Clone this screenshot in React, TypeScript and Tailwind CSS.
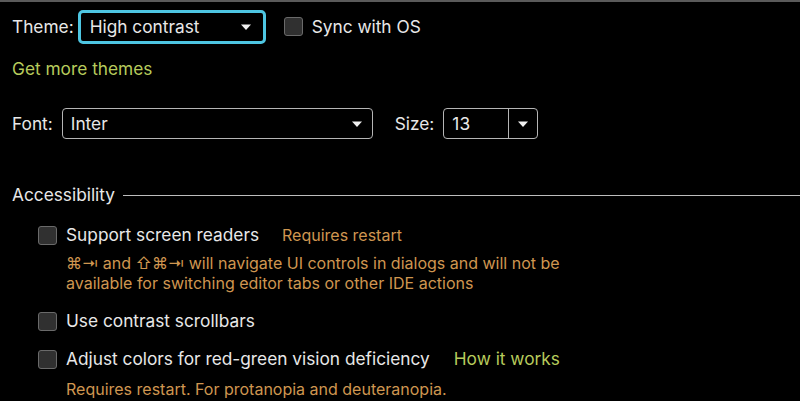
import React from "react";

const Caret = () => (
  <svg width="12" height="8" viewBox="0 0 12 8" className="shrink-0">
    <path d="M1 1.5 L11 1.5 L6 7 Z" fill="#f0f0f0" />
  </svg>
);

const Check = () => (
  <div className="w-[19px] h-[19px] rounded-[3px] border border-[#6a6a6a] bg-[#303030] shrink-0" />
);

export default function App() {
  return (
    <div
      className="w-[800px] h-[401px] bg-black text-[#e8e8e8] overflow-hidden relative border-t-2 border-[#5a5a5a]"
      style={{ fontFamily: "Inter, 'Noto Sans', sans-serif" }}
    >
      <div className="text-[17.3px] leading-[20px]">
        {/* Theme row */}
        <div className="flex items-center h-[35px] mt-[7px] pl-[12px]">
          <span>Theme:</span>
          <div className="ml-[4px] w-[188px] h-[34px] rounded-[5px] border-[3px] border-[#4ec6e2] flex items-center justify-between pl-[9px] pr-[11px]">
            <span>High contrast</span>
            <Caret />
          </div>
          <div className="ml-[18px] flex items-center gap-[9px]">
            <Check />
            <span>Sync with OS</span>
          </div>
        </div>
        {/* Get more themes */}
        <div className="pl-[12px] mt-[15px] text-[#b7cb5c]">Get more themes</div>

        {/* Font row */}
        <div className="flex items-center pl-[12px] mt-[29px] h-[31px]">
          <span>Font:</span>
          <div className="ml-[9px] w-[311px] h-[31px] rounded-[4px] border border-[#b5b5b5] flex items-center justify-between pl-[8px] pr-[9px]">
            <span>Inter</span>
            <Caret />
          </div>
          <span className="ml-[22px]">Size:</span>
          <div className="ml-[9px] w-[95px] h-[31px] rounded-[4px] border border-[#b5b5b5] flex items-stretch">
            <div className="flex-1 flex items-center pl-[8px] border-r border-[#b5b5b5]">13</div>
            <div className="w-[28px] flex items-center justify-center">
              <Caret />
            </div>
          </div>
        </div>

        {/* Accessibility */}
        <div className="flex items-center pl-[12px] mt-[46px]">
          <span>Accessibility</span>
          <div className="ml-[8px] flex-1 h-px bg-[#bdbdbd]" />
        </div>

        <div className="pl-[38px] mt-[20px]">
          <div className="flex items-center gap-[9px] h-[20px]">
            <Check />
            <span>Support screen readers</span>
            <span className="ml-[14px] text-[16px] text-[#cf9650]">Requires restart</span>
          </div>
          <div className="pl-[28px] mt-[8px] text-[16px] leading-[20px] text-[#cf9650]">
            <div>⌘⇥ and ⇧⌘⇥ will navigate UI controls in dialogs and will not be</div>
            <div>available for switching editor tabs or other IDE actions</div>
          </div>
          <div className="flex items-center gap-[9px] h-[20px] mt-[18px]">
            <Check />
            <span>Use contrast scrollbars</span>
          </div>
          <div className="flex items-center gap-[9px] h-[20px] mt-[18px]">
            <Check />
            <span>Adjust colors for red-green vision deficiency</span>
            <span className="ml-[15px] text-[#b7cb5c]">How it works</span>
          </div>
          <div className="pl-[28px] mt-[10px] text-[16px] text-[#cf9650]">
            Requires restart. For protanopia and deuteranopia.
          </div>
        </div>
      </div>
    </div>
  );
}
